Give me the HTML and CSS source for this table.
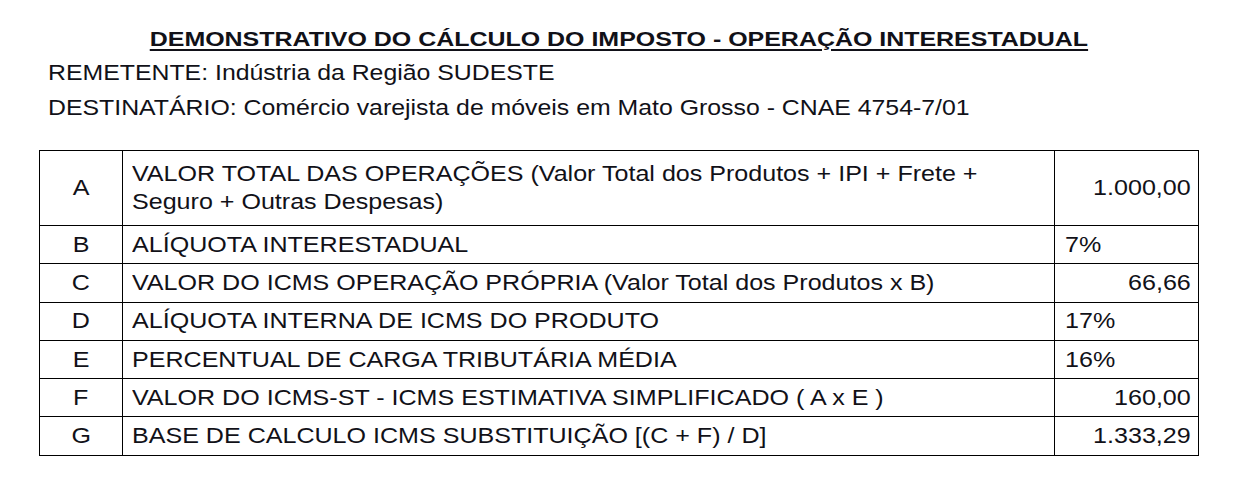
FILE: index.html
```html
<!DOCTYPE html>
<html lang="pt">
<head>
<meta charset="utf-8">
<link rel="stylesheet" href="styles.css">
</head>
<body>
<div class="page">
  <h1 class="title"><span class="sx">DEMONSTRATIVO DO CÁLCULO DO IMPOSTO - OPERAÇÃO INTERESTADUAL</span></h1>
  <p class="info"><span class="sx">REMETENTE: Indústria da Região SUDESTE</span></p>
  <p class="info second"><span class="sx">DESTINATÁRIO: Comércio varejista de móveis em Mato Grosso - CNAE 4754-7/01</span></p>
  <table class="calc">
    <colgroup><col class="c1"><col class="c2"><col class="c3"></colgroup>
    <tr class="tall"><td class="key"><span class="sx">A</span></td><td class="desc"><span class="sx">VALOR TOTAL DAS OPERAÇÕES (Valor Total dos Produtos + IPI + Frete +<br>Seguro + Outras Despesas)</span></td><td class="num"><span class="sx">1.000,00</span></td></tr>
    <tr><td class="key"><span class="sx">B</span></td><td class="desc"><span class="sx">ALÍQUOTA INTERESTADUAL</span></td><td class="pct"><span class="sx">7%</span></td></tr>
    <tr><td class="key"><span class="sx">C</span></td><td class="desc"><span class="sx">VALOR DO ICMS OPERAÇÃO PRÓPRIA (Valor Total dos Produtos x B)</span></td><td class="num"><span class="sx">66,66</span></td></tr>
    <tr><td class="key"><span class="sx">D</span></td><td class="desc"><span class="sx">ALÍQUOTA INTERNA DE ICMS DO PRODUTO</span></td><td class="pct"><span class="sx">17%</span></td></tr>
    <tr><td class="key"><span class="sx">E</span></td><td class="desc"><span class="sx">PERCENTUAL DE CARGA TRIBUTÁRIA MÉDIA</span></td><td class="pct"><span class="sx">16%</span></td></tr>
    <tr><td class="key"><span class="sx">F</span></td><td class="desc"><span class="sx">VALOR DO ICMS-ST - ICMS ESTIMATIVA SIMPLIFICADO ( A x E )</span></td><td class="num"><span class="sx">160,00</span></td></tr>
    <tr><td class="key"><span class="sx">G</span></td><td class="desc"><span class="sx">BASE DE CALCULO ICMS SUBSTITUIÇÃO [(C + F) / D]</span></td><td class="num"><span class="sx">1.333,29</span></td></tr>
  </table>
</div>
</body>
</html>
```
FILE: styles.css
```css
html, body {
  margin: 0;
  padding: 0;
  background: #ffffff;
}
body {
  font-family: "Liberation Sans", Arial, sans-serif;
  color: #111118;
}
.page {
  padding: 25px 0 0 39px;
  width: 1160px;
}
.sx {
  display: inline-block;
}
.title {
  margin: 0;
  font-size: 21px;
  font-weight: bold;
  text-align: center;
  line-height: 28px;
  width: 1160px;
}
.title .sx {
  text-decoration: underline;
  text-decoration-thickness: 2px;
  text-underline-offset: 3px;
  transform: scaleX(1.188);
  transform-origin: center;
}
.info {
  margin: 6px 0 0 9px;
  font-size: 22px;
  line-height: 28px;
}
.info .sx {
  transform: scaleX(1.129);
  transform-origin: left center;
  white-space: nowrap;
}
.info.second {
  margin-top: 7px;
}
.calc {
  margin-top: 28px;
  border-collapse: collapse;
  width: 1160px;
  table-layout: fixed;
  font-size: 21.5px;
}
.c1 { width: 83px; }
.c2 { width: 931px; }
.c3 { width: 144px; }
.calc td {
  border: 1px solid #000;
  height: 37.3px;
  padding: 0 9px;
  line-height: 28px;
  vertical-align: middle;
  white-space: nowrap;
}
.calc tr.tall td {
  height: 74px;
}
.calc .sx {
  transform: scaleX(1.166);
  transform-origin: left center;
}
.calc td.key {
  text-align: center;
  padding: 0;
}
.calc td.key .sx {
  transform-origin: center;
}
.calc td.num {
  text-align: right;
  padding-right: 7px;
}
.calc td.num .sx {
  transform-origin: right center;
}
.calc td.pct {
  text-align: left;
  padding-left: 10px;
}
```
